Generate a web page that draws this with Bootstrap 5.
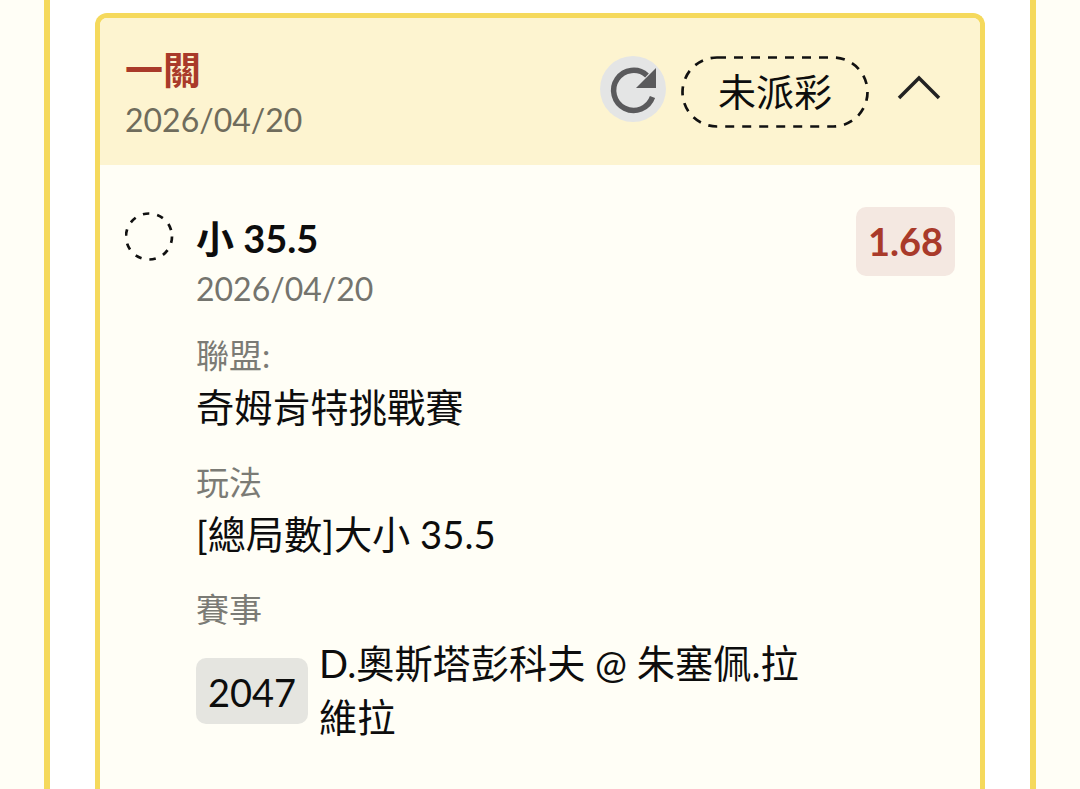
<!DOCTYPE html>
<html lang="zh-Hant"><head><meta charset="utf-8">
<link href="https://cdn.jsdelivr.net/npm/bootstrap@5.3.0/dist/css/bootstrap.min.css" rel="stylesheet">
<style>
html,body{height:100%;overflow:hidden}
body{background:#fffef6;font-family:Lato,"Noto Sans CJK TC",sans-serif;color:#0d0d0d;margin:0}
.shell{margin:0 44px;height:789px;background:#fff;border-left:6px solid #f5d95c;border-right:6px solid #f5d95c;padding:13px 45px 0;overflow:hidden}
.tick{border:5px solid #f5d95c;border-bottom:0;border-radius:12px 12px 0 0;background:#fffef6;height:800px;overflow:hidden}
.tick-head{background:#fdf4d0;height:147px;padding:28px 39px 0 25px}
.tick-title{color:#a93a2a;font-size:38px;font-weight:700;line-height:46px}
.tick-date{color:#6f6c5c;font-size:32px;line-height:48px;margin-top:4px}
.tick-refresh{width:66px;height:66px;background:#e4e5e5;border-radius:50%;margin-top:10px;display:block}
.tick-status{width:188px;height:72px;margin-left:15px;margin-top:10px;font-size:38px;line-height:71px;text-align:center}
.tick-status svg{left:0;top:0}
.tick-chev{margin-left:28px;margin-top:28px}
.tick-body{padding:47px 25px 0}
.tick-ring{width:50px;flex:none;margin-right:22px}
.tick-main{flex:1;min-width:0;margin-left:-1px}
.tick-pick{font-size:38px;font-weight:700;line-height:54px;margin-top:-1px;margin-bottom:1px}
.tick-sub{font-size:32px;line-height:46px;color:#74746e}
.tick-label{font-size:33px;line-height:48px;color:#7b7b75;margin-top:18.5px}
.tick-val + .tick-label{margin-top:23px}
.tick-val{font-size:38.2px;line-height:56px}
.tick-odds{width:99px;height:69px;background:#f4e8e1;color:#a93a2a;border-radius:10px;font-size:38px;font-weight:700;line-height:68px;text-align:center;margin-top:-5px}
.tick-num{width:112px;height:66px;background:#e5e5e0;border-radius:10px;font-size:38px;line-height:69px;text-align:center;flex:none;margin-right:11px;margin-top:25px}
.tick-event{width:490px;font-size:38.2px;line-height:54px;margin-top:3px}
</style></head>
<body>
<div class="shell"><div class="tick">
<div class="tick-head d-flex justify-content-between">
<div><div class="tick-title">一關</div><div class="tick-date">2026/04/20</div></div>
<div class="d-flex align-items-start">
<svg class="tick-refresh" width="66" height="66" viewBox="0 0 66 66"><path d="M52.500 41A20 20 0 1 1 47 19.500" fill="none" stroke="#5a5a5c" stroke-width="5.500"/><path d="M56 12v20H36z" fill="#5a5a5c"/></svg>
<div class="tick-status position-relative"><svg class="position-absolute" width="188" height="72"><rect x="1.500" y="1.500" width="185" height="69" rx="34.500" fill="none" stroke="#111" stroke-width="2.700" stroke-dasharray="9 8"/></svg>未派彩</div>
<svg class="tick-chev" width="44" height="26" viewBox="0 0 44 26"><path d="M2 24 22 4l20 20" fill="none" stroke="#222" stroke-width="3.500"/></svg>
</div></div>
<div class="tick-body d-flex">
<div class="tick-ring"><svg width="50" height="50"><circle cx="24" cy="24.500" r="23" fill="none" stroke="#111" stroke-width="2.700" stroke-dasharray="6.500 8"/></svg></div>
<div class="tick-main">
<div class="d-flex justify-content-between"><div><div class="tick-pick">小 35.5</div><div class="tick-sub">2026/04/20</div></div><div class="tick-odds">1.68</div></div>
<div class="tick-label">聯盟:</div><div class="tick-val">奇姆肯特挑戰賽</div>
<div class="tick-label">玩法</div><div class="tick-val">[總局數]大小 35.5</div>
<div class="tick-label">賽事</div>
<div class="d-flex"><div class="tick-num">2047</div><div class="tick-event">D.奧斯塔彭科夫 @ 朱塞佩.拉維拉</div></div>
</div></div>
</div></div>
</body></html>
